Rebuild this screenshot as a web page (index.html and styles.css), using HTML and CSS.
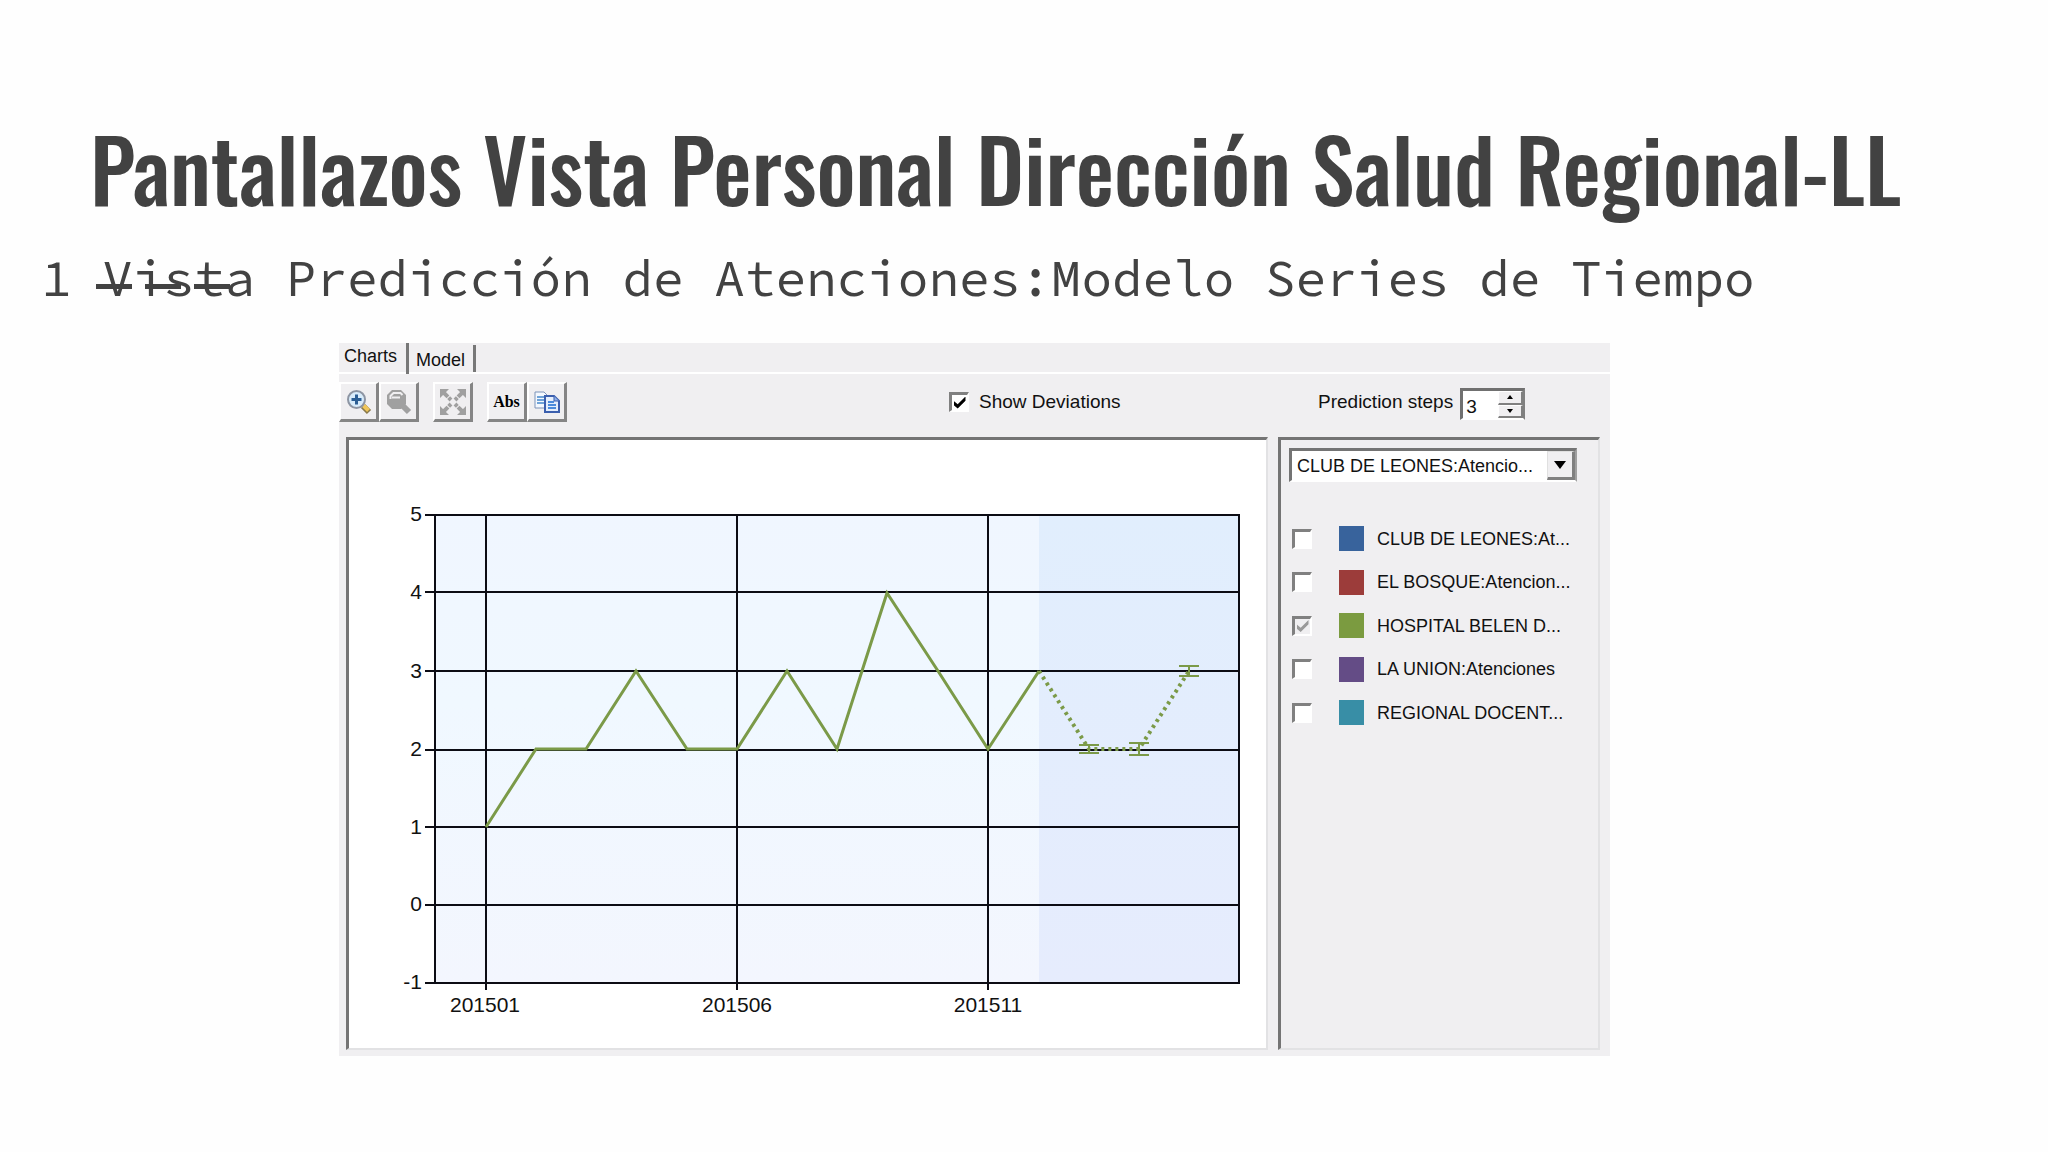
FILE: index.html
```html
<!DOCTYPE html>
<html lang="es">
<head>
<meta charset="utf-8">
<title>Pantallazos Vista Personal Dirección Salud Regional-LL</title>
<link rel="stylesheet" href="styles.css">
</head>
<body>
<main class="slide">
  <h1 class="title">Pantallazos Vista Personal Dirección Salud Regional-LL</h1>
  <p class="subtitle">1 <span class="struck">Vista</span> Predicción de Atenciones:Modelo Series de Tiempo</p>

  <section class="viewer">
    <div class="tabs" role="tablist">
      <button class="tab tab-active" role="tab" aria-selected="true">Charts</button>
      <button class="tab" role="tab" aria-selected="false">Model</button>
    </div>

    <div class="toolbar">
      <div class="tools">
        <div class="tool-group">
          <button class="tool" aria-label="Zoom in">
            <svg width="26" height="26" viewBox="0 0 26 26">
              <path d="M17 17l6 6" stroke="#8a7a4a" stroke-width="6"/>
              <path d="M17.500 16.500l5 5" stroke="#f0c65a" stroke-width="4"/>
              <circle cx="10.500" cy="10.500" r="8.500" fill="#d8ecfb" stroke="#8d95a3" stroke-width="2"/>
              <path d="M10.500 5.500v10M5.500 10.500h10" stroke="#2c5f95" stroke-width="3"/>
            </svg>
          </button>
          <button class="tool" aria-label="Zoom out">
            <svg width="26" height="26" viewBox="0 0 26 26">
              <path d="M15 15l8 8" stroke="#a0a0a0" stroke-width="6"/>
              <path d="M6 1h9l5 5v9l-5 5H6l-5-5V6z" fill="#a0a0a0"/>
              <path d="M4.500 10V7l3-3h7l2 2M6 8.500h8" fill="none" stroke="#f0eff1" stroke-width="2"/>
            </svg>
          </button>
        </div>
        <div class="tool-group">
          <button class="tool" aria-label="Zoom to fit">
            <svg width="28" height="28" viewBox="0 0 28 28">
              <path d="M1 1h9L1 10zM27 1h-9l9 9zM1 27h9l-9-9zM27 27h-9l9-9z" fill="#a0a0a0"/>
              <path d="M4 4l8 8M24 4l-8 8M4 24l8-8M24 24l-8-8" stroke="#a0a0a0" stroke-width="4" stroke-dasharray="7 1"/>
            </svg>
          </button>
        </div>
        <div class="tool-group">
          <button class="tool tool-text">Abs</button>
          <button class="tool" aria-label="Copy">
            <svg width="26" height="24" viewBox="0 0 26 24">
              <path d="M1 2h9l4 4v12H1z" fill="#f4f8fe" stroke="#7d93b8" stroke-width="1"/>
              <path d="M3 7h7M3 10h7M3 13h7" stroke="#6fa3d8" stroke-width="2"/>
              <path d="M11 6h9l5 5v11H11z" fill="#e4eefc" stroke="#3b5fae" stroke-width="2"/>
              <path d="M20 6v5h5" fill="#8fb0e8" stroke="#3b5fae" stroke-width="1"/>
              <path d="M14 12h6M14 15h8M14 18h8" stroke="#4b8bdc" stroke-width="2"/>
            </svg>
          </button>
        </div>
      </div>
      <label class="deviations"><input class="check" type="checkbox" checked>Show Deviations</label>
      <div class="steps">
        <label for="steps">Prediction steps</label>
        <div class="spinner">
          <input id="steps" class="spinner-value" type="number" value="3">
          <div class="spinner-buttons">
            <button class="spin" aria-label="More"><svg width="6" height="4" viewBox="0 0 6 4"><path d="M0 4l3-4 3 4z"/></svg></button>
            <button class="spin" aria-label="Fewer"><svg width="6" height="4" viewBox="0 0 6 4"><path d="M0 0l3 4 3-4z"/></svg></button>
          </div>
        </div>
      </div>
    </div>

    <div class="panes">
      <div class="pane chart-pane">
        <svg class="chart" viewBox="0 0 917 608" role="img" aria-label="Atenciones">
          <defs>
            <linearGradient id="past" x1="0" y1="0" x2="0" y2="1"><stop offset="0" stop-color="#f0f6ff"/><stop offset=".4" stop-color="#f0f8ff"/><stop offset="1" stop-color="#f3f6fe"/></linearGradient>
            <linearGradient id="future" x1="0" y1="0" x2="0" y2="1"><stop offset="0" stop-color="#e1eefd"/><stop offset="1" stop-color="#e6ecfd"/></linearGradient>
          </defs>
          <rect x="86" y="75" width="604" height="468" fill="url(#past)"/>
          <rect x="690" y="75" width="200" height="468" fill="url(#future)"/>
          <path class="grid" d="M76 75H891M76 152H890M76 231H890M76 310H890M76 387H890M76 465H890M76 543H891M86 75V543M137 75V550M388 75V550M639 75V550M890 75V543"/>
          <polyline class="series" points="137,387 187,309 237,309 287,231 338,309 388,309 438,231 488,309 538,153 589,231 639,309 690,231"/>
          <polyline class="series forecast" points="690,231 740,309 790,309 840,231"/>
          <path class="deviation" d="M730 305h20M730 313h20M740 305v8M780 303h20M780 315h20M790 303v12M830 226h20M830 236h20M840 226v10"/>
          <g class="axis axis-y">
            <text x="73" y="81">5</text><text x="73" y="159">4</text><text x="73" y="238">3</text><text x="73" y="316">2</text><text x="73" y="394">1</text><text x="73" y="471">0</text><text x="73" y="549">-1</text>
          </g>
          <g class="axis axis-x">
            <text x="136" y="572">201501</text><text x="388" y="572">201506</text><text x="639" y="572">201511</text>
          </g>
        </svg>
      </div>

      <aside class="pane legend-pane">
        <div class="combo">
          <select class="combo-select" aria-label="Serie">
            <option>CLUB DE LEONES:Atencio...</option>
            <option>EL BOSQUE:Atencion...</option>
            <option>HOSPITAL BELEN D...</option>
          </select>
          <span class="combo-arrow"><svg width="12" height="8" viewBox="0 0 12 8"><path d="M0 0h12L6 8z"/></svg></span>
        </div>
        <ul class="legend">
          <li><label class="entry"><input class="check" type="checkbox"><span class="swatch blue"></span>CLUB DE LEONES:At...</label></li>
          <li><label class="entry"><input class="check" type="checkbox"><span class="swatch red"></span>EL BOSQUE:Atencion...</label></li>
          <li><label class="entry"><input class="check" type="checkbox" checked disabled><span class="swatch green"></span>HOSPITAL BELEN D...</label></li>
          <li><label class="entry"><input class="check" type="checkbox"><span class="swatch purple"></span>LA UNION:Atenciones</label></li>
          <li><label class="entry"><input class="check" type="checkbox"><span class="swatch teal"></span>REGIONAL DOCENT...</label></li>
        </ul>
      </aside>
    </div>
  </section>
</main>
</body>
</html>
```
FILE: styles.css
```css
* { box-sizing: border-box; }

body {
  margin: 0;
  background: #fefefe;
  color: #111;
  font: 18px/24px "Liberation Sans", Arial, sans-serif;
}

button, input, select { font: inherit; color: inherit; margin: 0; border-radius: 0; }

.slide { padding-top: 107px; }

.title {
  margin: 0 0 0 90px;
  font: 500 86px/120px Oswald, "Roboto Condensed", "Open Sans Condensed", sans-serif;
  color: #424242;
  white-space: nowrap;
}

.subtitle {
  margin: 0 0 0 41px;
  padding: 11px 0 25px;
  font: 51px/80px "Source Code Pro", "Noto Sans Mono", "Liberation Mono", monospace;
  color: #424242;
  white-space: nowrap;
}

.struck { position: relative; }
.struck::after {
  content: "";
  position: absolute;
  left: -6px;
  width: 134px;
  bottom: 21px;
  height: 5px;
  background: repeating-linear-gradient(90deg, #424242 0 36px, transparent 36px 49px);
}

/* Windows-classic chart viewer */
.viewer {
  margin: 0 438px 96px 339px;
  padding-bottom: 6px;
  background: #f0eff1;
}

.tabs {
  display: flex;
  height: 31px;
  border-bottom: 2px solid #fff;
}
.tab {
  border: 0;
  border-right: 3px solid #777;
  background: none;
  padding: 3px 8px 0 7px;
  height: 27px;
  align-self: flex-end;
  line-height: 24px;
}
.tab-active {
  height: 31px;
  align-self: flex-start;
  padding: 0 9px 5px 5px;
  margin-bottom: -2px;
}

.toolbar {
  display: grid;
  grid-template-columns: 610px 369px 1fr;
  align-items: center;
  height: 63px;
  padding-bottom: 7px;
  font-size: 19px;
}
.tools { display: flex; gap: 14px; }
.tool-group { display: flex; }
.tool {
  display: grid;
  place-items: center;
  width: 40px;
  height: 40px;
  padding: 0;
  border: 2px solid;
  border-width: 2px 3px 3px 2px;
  border-color: #fff #858585 #858585 #fff;
  background: #f0eff1;
}
.tool-text { font: bold 16px/20px "Liberation Serif", "Times New Roman", serif; color: #000; }

.deviations { display: flex; align-items: center; gap: 10px; }

.check {
  appearance: none;
  flex: none;
  display: grid;
  place-items: center;
  width: 20px;
  height: 20px;
  border: 2px solid;
  border-width: 3px 2px 2px 3px;
  border-color: #808080 #fff #fff #808080;
  background: #fff;
}
.check:checked::before {
  content: "";
  width: 12px;
  height: 12px;
  background: #000;
  clip-path: polygon(0 35%, 35% 65%, 100% 0, 100% 35%, 35% 100%, 0 70%);
}
.check:disabled { background: #f0eff1; }
.check:disabled::before { background: #999; }

.steps { display: flex; align-items: center; gap: 7px; }
.spinner {
  display: flex;
  width: 65px;
  height: 32px;
  margin-top: 4px;
  border: 2px solid;
  border-width: 3px 2px 2px 3px;
  border-color: #707070 #808080 #fff #707070;
  background: #fff;
}
.spinner-value {
  flex: 1;
  min-width: 0;
  border: 0;
  padding: 4px 0 0 3px;
  background: none;
  appearance: textfield;
}
.spinner-value::-webkit-inner-spin-button { display: none; }
.spinner-buttons { display: flex; flex-direction: column; width: 25px; }
.spin {
  flex: 1;
  display: grid;
  place-items: center;
  padding: 0;
  border: 1px solid #fff;
  border-right: 2px solid #808080;
  border-bottom: 2px solid #808080;
  background: #f0eff1;
}

.panes {
  display: grid;
  grid-template-columns: 1fr 322px;
  gap: 10px;
  padding: 0 10px 0 7px;
}
.pane {
  border: 3px solid;
  border-width: 3px 2px 2px 3px;
  border-color: #747474 #e2e2e4 #e2e2e4 #747474;
}
.chart-pane { background: #fff; }
.chart { display: block; width: 100%; height: auto; }
.grid { fill: none; stroke: #0c0c14; stroke-width: 2px; shape-rendering: crispEdges; }
.series { fill: none; stroke: #7b9a48; stroke-width: 3px; }
.forecast { stroke-width: 4px; stroke-dasharray: 3 4; }
.deviation { fill: none; stroke: #7b9a48; stroke-width: 2px; }
.axis { font-size: 21px; fill: #111; }
.axis-y { text-anchor: end; }
.axis-x { text-anchor: middle; }

.legend-pane { padding: 8px 21px 0 8px; }
.combo {
  display: flex;
  height: 34px;
  border: 3px solid;
  border-width: 3px 2px 2px 3px;
  border-color: #747474 #a0a0a0 #fff #747474;
  background: #fff;
}
.combo-select {
  appearance: none;
  flex: 1;
  min-width: 0;
  padding: 0 0 0 5px;
  border: 0;
  background: none;
}
.combo-arrow {
  display: grid;
  place-items: center;
  width: 28px;
  border: 2px solid;
  border-width: 1px 3px 3px 1px;
  border-color: #e0e0e0 #808080 #808080 #e0e0e0;
  background: #f0eff1;
}

.legend {
  display: flex;
  flex-direction: column;
  justify-content: space-between;
  height: 199px;
  margin: 44px 0 0;
  padding: 0 0 0 3px;
  list-style: none;
}
.entry { display: flex; align-items: center; height: 25px; white-space: nowrap; }
.swatch { width: 25px; height: 25px; margin: 0 13px 0 27px; }
.blue { background: #38639c; }
.red { background: #9c3c3a; }
.green { background: #7b9b40; }
.purple { background: #644c86; }
.teal { background: #388ea6; }
```
